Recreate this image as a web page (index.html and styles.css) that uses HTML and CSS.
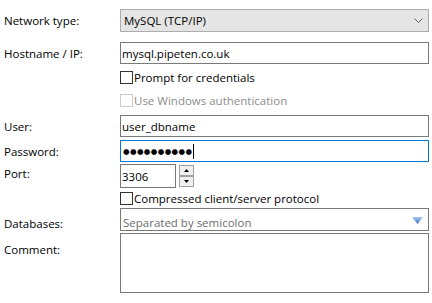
FILE: index.html
```html
<!DOCTYPE html>
<html>
<head>
<meta charset="utf-8">
<link rel="stylesheet" href="styles.css">
</head>
<body>
<div class="form">
  <div class="row r-net">
    <span class="lbl">Network type:</span>
    <div class="select"><span>MySQL (TCP/IP)</span>
      <svg class="chev" width="9" height="5" viewBox="0 0 9 5"><path d="M0.5 0.5 L4.5 4.5 L8.5 0.5" fill="none" stroke="#5a5a5a" stroke-width="1"/></svg>
    </div>
  </div>
  <div class="row r-host">
    <span class="lbl">Hostname / IP:</span>
    <div class="field">mysql.pipeten.co.uk</div>
  </div>
  <div class="row r-cb1">
    <span></span>
    <div class="check"><span class="box"></span><span>Prompt for credentials</span></div>
  </div>
  <div class="row r-cb2">
    <span></span>
    <div class="check disabled"><span class="box"></span><span>Use Windows authentication</span></div>
  </div>
  <div class="row r-user">
    <span class="lbl">User:</span>
    <div class="field">user_dbname</div>
  </div>
  <div class="row r-pass">
    <span class="lbl">Password:</span>
    <div class="field focus"><span class="dots">●●●●●●●●●●</span><span class="caret"></span></div>
  </div>
  <div class="row r-port">
    <span class="lbl">Port:</span>
    <div class="port-wrap">
      <div class="field port">3306</div>
      <div class="spin">
        <div class="spin-btn"><svg width="5" height="3" viewBox="0 0 5 3"><path d="M0 3 L2.5 0 L5 3 Z" fill="#000"/></svg></div>
        <div class="spin-btn"><svg width="5" height="3" viewBox="0 0 5 3"><path d="M0 0 L2.5 3 L5 0 Z" fill="#000"/></svg></div>
      </div>
    </div>
  </div>
  <div class="row r-cb3">
    <span></span>
    <div class="check"><span class="box"></span><span>Compressed client/server protocol</span></div>
  </div>
  <div class="row r-db">
    <span class="lbl">Databases:</span>
    <div class="field combo"><span class="hint">Separated by semicolon</span>
      <svg class="tri" width="11" height="7" viewBox="0 0 11 7">
        <defs><linearGradient id="g" x1="0" y1="0" x2="0" y2="1"><stop offset="0" stop-color="#a9c8f2"/><stop offset="1" stop-color="#3572cc"/></linearGradient></defs>
        <path d="M0 0 H11 L5.5 7 Z" fill="url(#g)"/>
      </svg>
    </div>
  </div>
  <div class="row r-comment">
    <span class="lbl">Comment:</span>
    <div class="field area"></div>
  </div>
</div>
</body>
</html>
```
FILE: styles.css
```css
html, body {
  margin: 0;
  background: #fff;
}
body {
  font-family: "Segoe UI", "Open Sans", sans-serif;
  font-size: 11.5px;
  color: #000;
}
.form {
  padding-left: 4px;
  padding-top: 9px;
}
.row {
  display: grid;
  grid-template-columns: 116px 309px;
  align-items: center;
}
.lbl {
  line-height: 15px;
  white-space: nowrap;
}
.select {
  height: 23px;
  box-sizing: border-box;
  border: 1px solid #adadad;
  background: #e5e5e5;
  display: flex;
  align-items: center;
  justify-content: space-between;
  padding: 0 5px 0 3px;
}
.field {
  box-sizing: border-box;
  height: 22px;
  border: 1px solid #7a7a7a;
  background: #fff;
  display: flex;
  align-items: center;
  padding: 0 2px 0 1px;
  white-space: nowrap;
}
.field.focus {
  border-color: #0078d7;
}
.dots {
  font-family: "DejaVu Sans", sans-serif;
  font-size: 7.5px;
  letter-spacing: 0.4px;
  padding-left: 1px;
}
.caret {
  width: 1px;
  height: 15px;
  background: #000;
  margin-left: 1px;
}
.r-host { margin-top: 10px; }
.r-cb1 { margin-top: 7px; }
.r-cb2 { margin-top: 10px; }
.r-user { margin-top: 8px; }
.r-pass { margin-top: 3px; }
.r-port { margin-top: 2px; align-items: start; }
.r-cb3 { margin-top: 4px; }
.r-db { margin-top: 3px; align-items: start; }
.r-comment { margin-top: 2px; align-items: start; }

.r-port .lbl { padding-top: 2px; }
.r-comment .lbl { padding-top: 9px; }
.r-db .lbl { padding-top: 8px; }

.check {
  display: flex;
  align-items: center;
  height: 13px;
  white-space: nowrap;
}
.box {
  width: 13px;
  height: 13px;
  box-sizing: border-box;
  border: 1px solid #333;
  background: #fff;
  margin-right: 1px;
  flex: none;
}
.check.disabled {
  color: #8d8d8d;
}
.check.disabled .box {
  border-color: #cccccc;
}
.port-wrap {
  display: flex;
  align-items: flex-start;
  gap: 3px;
}
.field.port {
  width: 56px;
  height: 24px;
}
.spin {
  display: flex;
  flex-direction: column;
  margin-top: 1px;
  width: 15px;
}
.spin-btn {
  height: 11px;
  box-sizing: border-box;
  border: 1px solid #a0a0a0;
  background: #f0f0f0;
  display: flex;
  align-items: center;
  justify-content: center;
}
.field.combo {
  height: 23px;
  justify-content: space-between;
  align-items: flex-end;
  padding: 0 5px 0 2px;
}
.field.combo .tri {
  align-self: center;
  margin-top: 2px;
}
.hint {
  color: #6d6d6d;
  line-height: 14px;
}
.field.area {
  height: 60px;
}
```
